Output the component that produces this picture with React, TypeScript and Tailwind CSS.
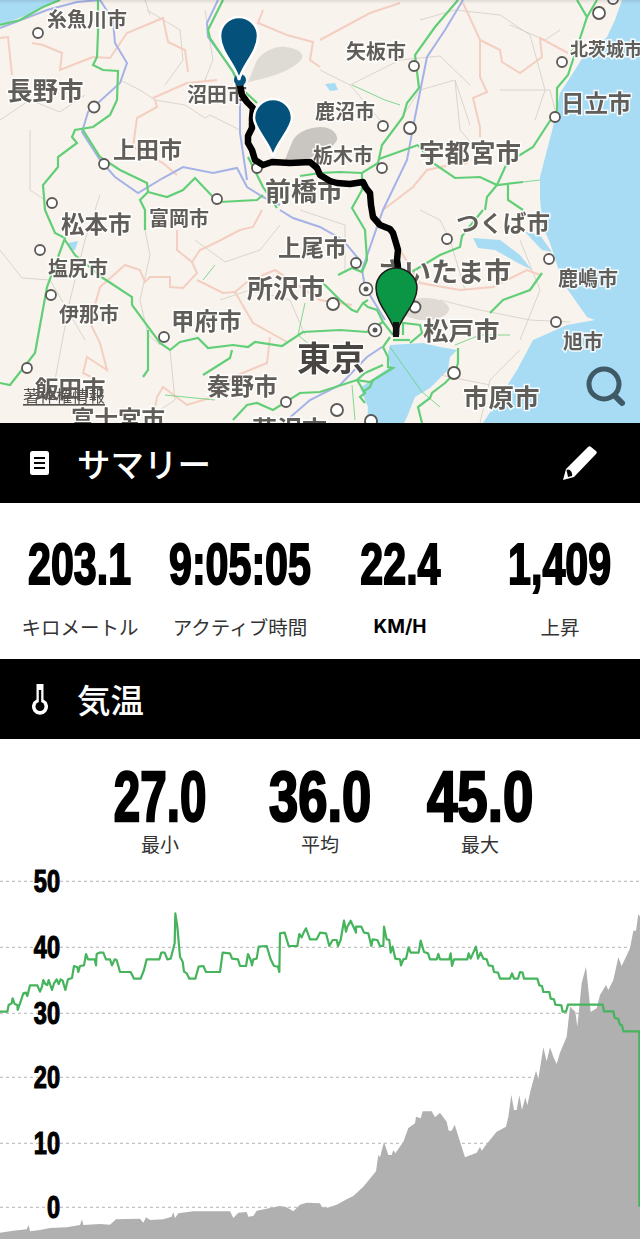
import { Fragment } from "react"

type Pt = number[]

const toPoints = (pts: Pt) => {
  const out: string[] = []
  for (let i = 0; i < pts.length; i += 2) out.push(`${pts[i]},${pts[i + 1]}`)
  return out.join(" ")
}

const stats = [
  { value: "203.1", label: "キロメートル" },
  { value: "9:05:05", label: "アクティブ時間" },
  { value: "22.4", label: "KM/H", bold: true },
  { value: "1,409", label: "上昇" },
]

const temps = [
  { value: "27.0", label: "最小", squeeze: "scale-x-[0.68]" },
  { value: "36.0", label: "平均", squeeze: "scale-x-[0.75]" },
  { value: "45.0", label: "最大", squeeze: "scale-x-[0.78]" },
]

const greenRoads: Pt[] = [
  [98, 0, 98, 33, 97, 57, 93, 65, 103, 70, 118, 71, 117, 100, 110, 115, 93, 127, 75, 130, 72, 137, 77, 143, 58, 157, 58, 167, 43, 185, 45, 210, 55, 233, 65, 238, 47, 287, 35, 353, 10, 385, 0, 383],
  [0, 25, 20, 20, 43, 7, 60, 0],
  [83, 130, 100, 157, 120, 170, 147, 183, 148, 192, 167, 197, 183, 190, 195, 178, 213, 197, 220, 202, 257, 200, 263, 195],
  [148, 192, 140, 200, 145, 210, 145, 230],
  [223, 0, 208, 30, 210, 38, 233, 72, 240, 87, 257, 103],
  [248, 157, 263, 187, 277, 208],
  [458, 0, 435, 27, 415, 55, 419, 88, 407, 103, 403, 117, 382, 145, 378, 163, 362, 173, 340, 172, 320, 173, 300, 176],
  [418, 145, 379, 159],
  [418, 145, 433, 163, 455, 178, 480, 177, 497, 185, 523, 182],
  [577, 0, 587, 17, 597, 0],
  [587, 17, 568, 75, 557, 88, 557, 110, 533, 147, 507, 163, 497, 185, 487, 197, 485, 210],
  [508, 185, 508, 200, 523, 210],
  [362, 173, 362, 190, 352, 208, 365, 230, 367, 260, 362, 272, 352, 268, 338, 275],
  [65, 240, 75, 255, 103, 278, 132, 297, 132, 305, 160, 343, 170, 350, 180, 342, 198, 338, 208, 348, 233, 345, 248, 347, 255, 342, 282, 346, 303, 332, 340, 330, 367, 332, 383, 322],
  [148, 330, 148, 370, 143, 377],
  [232, 350, 230, 358, 203, 375],
  [233, 420, 247, 405, 257, 403, 273, 410, 300, 393, 320, 392, 357, 380],
  [320, 280, 340, 300, 352, 310, 357, 312, 363, 303, 368, 300],
  [363, 303, 368, 307, 377, 310, 383, 322, 393, 335],
  [390, 337, 383, 347, 388, 357, 388, 367, 393, 368, 370, 382, 357, 380, 365, 373, 383, 365],
  [357, 380, 365, 393, 360, 397, 365, 403],
  [373, 380, 370, 387, 363, 392],
  [403, 335, 403, 323, 420, 325, 422, 333, 410, 343],
  [393, 340, 410, 340],
  [410, 273, 440, 255, 460, 247, 462, 236, 483, 210],
  [542, 273, 530, 290, 503, 300, 490, 313],
  [458, 348, 458, 363, 455, 373, 445, 383, 432, 393, 430, 398, 418, 407, 422, 423],
]

const thinGreen: Pt[] = [
  [352, 85, 385, 100, 400, 105],
  [570, 52, 580, 42],
  [523, 182, 540, 180],
  [203, 280, 215, 265],
  [305, 303, 298, 335, 310, 345],
  [455, 345, 480, 335, 510, 335],
  [165, 395, 215, 400],
  [390, 347, 422, 392, 440, 407],
  [352, 385, 355, 420],
]

const rails: Pt[] = [
  [0, 28, 47, 10, 77, 2, 100, 0, 113, 20, 115, 43, 127, 63, 120, 83, 88, 112, 82, 132, 100, 160, 115, 177, 138, 193, 163, 178, 183, 167, 213, 173, 237, 168, 247, 187, 263, 197, 280, 205],
  [218, 0, 207, 23, 208, 37, 230, 67, 240, 80, 240, 133, 247, 180],
  [463, 0, 445, 30, 427, 57, 415, 117, 407, 160, 383, 210, 362, 270, 365, 287, 385, 320],
  [280, 210, 293, 218, 320, 227, 343, 240, 362, 263],
  [287, 420, 310, 400, 340, 385, 367, 357, 382, 347],
]

const borders: Pt[] = [
  [0, 38, 8, 37, 12, 75],
  [32, 43, 43, 45, 62, 53, 60, 70, 80, 62, 93, 57, 110, 58, 127, 33, 163, 18, 168, 42, 185, 50, 188, 72],
  [155, 100, 157, 107, 137, 118, 133, 147, 163, 163, 177, 175],
  [153, 98, 187, 83, 217, 80],
  [263, 10, 258, 23, 287, 35, 313, 42, 310, 60, 320, 67],
  [320, 40, 370, 13, 400, 3],
  [463, 3, 470, 18, 480, 40, 500, 50, 502, 62, 520, 73, 542, 57, 540, 38, 568, 53],
  [480, 40, 480, 77, 487, 92, 473, 98, 480, 127, 480, 137],
  [383, 210, 413, 187, 427, 170, 450, 165, 468, 163],
  [177, 230, 177, 250, 192, 262, 200, 250, 217, 242, 240, 230, 253, 227, 262, 210],
  [192, 262, 197, 273, 183, 288, 170, 287, 170, 277, 150, 277, 145, 282, 140, 270, 125, 265, 100, 287, 90, 323, 100, 343, 107, 370, 87, 357, 83, 373, 103, 383],
  [197, 280, 223, 293, 235, 292, 253, 323, 287, 342],
  [270, 337, 267, 363, 233, 377, 213, 397, 187, 405, 163, 387, 157, 397, 153, 420],
  [235, 292, 247, 282, 275, 270, 320, 300, 352, 305],
  [400, 250, 420, 283, 460, 290, 493, 287, 513, 277, 527, 270, 540, 275],
]

const lines: Pt[] = [
  [0, 120, 30, 100, 60, 112, 85, 95],
  [30, 130, 30, 190, 45, 200],
  [120, 80, 140, 90, 155, 100, 185, 105, 205, 118, 210, 115, 240, 130],
  [147, 10, 180, 30, 183, 60, 165, 85],
  [205, 10, 213, 60, 205, 80],
  [145, 0, 150, 15],
  [100, 195, 85, 240, 70, 300, 55, 380],
  [145, 230, 150, 255, 140, 300, 148, 335, 160, 345],
  [0, 250, 22, 278, 50, 280, 85, 340],
  [170, 350, 175, 400, 145, 420],
  [195, 240, 225, 262, 260, 250, 280, 225],
  [220, 300, 250, 290, 290, 300, 305, 335],
  [420, 20, 455, 10, 500, 15, 530, 35, 545, 90, 535, 120],
  [400, 120, 420, 90, 455, 80, 470, 125],
  [455, 80, 460, 130, 490, 165],
  [500, 90, 550, 90, 555, 110],
  [320, 70, 350, 85, 380, 70, 400, 60, 440, 56, 470, 85],
  [350, 85, 380, 120],
  [560, 30, 545, 40, 510, 25],
  [440, 300, 480, 310, 530, 320, 570, 322],
  [420, 210, 440, 220, 450, 240, 465, 290],
  [300, 210, 345, 225, 345, 270],
  [520, 240, 540, 290, 520, 340],
  [520, 350, 490, 380, 480, 423],
  [440, 375, 490, 385, 510, 395],
]

const labels = [
  { t: "糸魚川市", x: 47, y: 18, s: 20 },
  { t: "長野市", x: 7, y: 88, s: 25.5 },
  { t: "沼田市", x: 187, y: 93, s: 20 },
  { t: "上田市", x: 113, y: 148, s: 23 },
  { t: "前橋市", x: 265, y: 189, s: 26 },
  { t: "鹿沼市", x: 315, y: 110, s: 20 },
  { t: "栃木市", x: 313, y: 154, s: 20 },
  { t: "矢板市", x: 346, y: 50, s: 20 },
  { t: "宇都宮市", x: 419, y: 150, s: 25.5 },
  { t: "北茨城市", x: 570, y: 48, s: 18 },
  { t: "日立市", x: 561, y: 102, s: 23.5 },
  { t: "松本市", x: 61, y: 223, s: 23.5 },
  { t: "富岡市", x: 149, y: 217, s: 20 },
  { t: "上尾市", x: 278, y: 246, s: 23 },
  { t: "塩尻市", x: 48, y: 267, s: 20 },
  { t: "所沢市", x: 247, y: 286, s: 26 },
  { t: "伊那市", x: 59, y: 313, s: 20 },
  { t: "甲府市", x: 171, y: 320, s: 23.5 },
  { t: "秦野市", x: 207, y: 385, s: 23.5 },
  { t: "飯田市", x: 35, y: 388, s: 23.5 },
  { t: "富士宮市", x: 71, y: 418, s: 23.5 },
  { t: "つくば市", x: 456, y: 222, s: 23.5 },
  { t: "さいたま市", x: 377, y: 270, s: 27 },
  { t: "鹿嶋市", x: 558, y: 277, s: 20 },
  { t: "松戸市", x: 423, y: 328, s: 25.5 },
  { t: "旭市", x: 563, y: 340, s: 20 },
  { t: "市原市", x: 463, y: 395, s: 25.5 },
  { t: "藤沢市", x: 252, y: 428, s: 25 },
]

const cities = [
  [38, 33, 5], [94, 107, 5.5], [104, 164, 5], [52, 203, 5], [217, 199, 5], [257, 168, 5],
  [40, 250, 5], [51, 295, 5], [164, 337, 5], [27, 368, 5], [286, 402, 5],
  [414, 66, 5], [383, 126, 5], [410, 128, 6], [382, 168, 5], [562, 62, 5], [555, 117, 5], [599, 13, 6], [613, -1, 5],
  [447, 239, 5], [549, 259, 5], [356, 263, 5], [333, 304, 6], [415, 307, 5.5], [556, 322, 5], [454, 373, 6], [337, 410, 6], [371, 421, 6],
]

// temperature line, in 3x crop coords of the chart
const tempA: Pt = [0,455,22,455,26,435,35,430,38,415,44,432,52,435,53,450,60,430,70,400,78,398,82,408,90,376,112,376,120,395,126,380,130,360,136,372,142,375,146,360,152,378,156,390,162,370,170,358,176,372,182,358,188,362,196,390,204,358,216,354,222,318,232,322,235,336,240,318,252,316,258,282,264,298,284,298,288,316,290,282,298,278,310,278,318,298,330,298,336,316,344,298,350,300,360,336,392,336,402,356,422,356,432,330,440,298,478,298,484,278,494,278,502,298,512,296,524,250,526,160,532,200,540,290,548,305,552,335,560,340,568,356,586,356,596,320,610,318,618,336,660,336,668,278,690,280,696,296,714,298,720,318,738,318,744,282,752,300,756,316,760,298,770,296,776,260,800,258,812,298,822,318,834,320,838,336,840,220,854,218,866,258,892,258,898,222,905,232,910,220,918,205,930,238,950,238,960,218]
const tempB: Pt = [0,218,18,220,28,258,38,240,50,240,54,258,62,240,72,182,78,215,82,200,92,182,100,200,108,218,108,200,124,200,132,218,145,220,154,258,158,238,172,240,180,258,190,258,192,200,200,238,208,240,212,278,218,260,226,296,240,298,243,316,250,298,258,296,266,262,272,278,296,278,302,242,312,276,324,280,330,298,350,298,355,282,360,298,388,298,392,280,396,318,402,298,442,298,446,280,452,296,460,278,468,260,474,296,482,278,490,296,500,298,506,316,518,318,522,336,534,338,540,356,570,356,576,340,582,356,594,356,600,336,608,338,612,356,652,356,658,376,666,378,670,396,688,396,692,416,702,418,706,434,724,436,728,455,738,455,744,434,848,434,852,454,880,454,884,474,894,476,900,494,906,496,910,514,958,514,958,1040]
const elevA: Pt = [0,1118,40,1112,80,1108,86,1095,90,1114,120,1110,150,1104,200,1102,240,1095,246,1078,250,1095,300,1092,330,1094,348,1078,420,1076,430,1088,438,1072,450,1080,490,1078,515,1070,520,1056,525,1075,535,1060,580,1054,625,1054,690,1054,700,1074,715,1058,740,1056,745,1070,760,1068,770,1052,800,1046,840,1038,860,1042,880,1054,900,1034,920,1028,960,1030]
const elevB: Pt = [0,1030,5,1040,20,1044,50,1034,80,1018,100,1008,130,980,168,934,175,885,180,892,192,846,205,885,215,885,220,870,226,880,250,845,265,804,285,790,288,770,302,775,308,754,335,754,345,772,360,758,380,785,386,812,395,812,404,794,435,892,470,878,480,860,485,872,500,852,530,815,558,800,565,770,574,704,582,750,590,750,598,706,606,750,616,712,622,736,632,690,648,632,655,656,670,562,680,604,690,562,700,590,710,612,720,578,740,530,750,440,766,455,772,500,785,370,798,320,812,456,830,445,840,405,858,375,865,390,880,360,895,292,905,318,930,265,940,212,948,212,955,162,960,170]

const scale = (a: Pt, b: Pt) => [
  ...a.map((v) => v / 3),
  ...b.map((v, i) => (i % 2 === 0 ? (v + 960) / 3 : v / 3)),
]

const tempLine = toPoints(scale(tempA, tempB))
const elevArea = toPoints([...scale(elevA, elevB), 640, 379, 0, 379])

const axis = [
  { v: "50", y: 21.3 },
  { v: "40", y: 87.3 },
  { v: "30", y: 153.3 },
  { v: "20", y: 217.3 },
  { v: "10", y: 283.3 },
  { v: "0", y: 347.3 },
]

function MapView() {
  return (
    <div className="relative h-[423px] overflow-hidden bg-[#f8f3ec]">
      <svg width="640" height="423" viewBox="0 0 640 423" className="block blur-[0.5px]">
        <polygon fill="#a8dcf5" points="0,0 57,0 30,14 0,25" />
        <polygon
          fill="#a8dcf5"
          points="622,0 615,20 607,37 583,57 573,73 560,93 553,127 547,150 540,177 540,197 542,225 550,243 563,283 587,317 595,320 567,325 533,340 517,370 500,397 483,423 640,423 640,0"
        />
        <polygon
          fill="#a8dcf5"
          points="390,345 423,343 440,347 457,350 450,357 448,370 430,388 415,397 407,417 403,425 367,425 368,407 360,388 390,367 388,353"
        />
        <polygon fill="#a8dcf5" points="473,238 500,240 520,255 532,270 518,263 495,250 478,248" />
        <polygon fill="#a8dcf5" points="525,232 540,235 552,252 542,250" />
        <polygon fill="#a8dcf5" points="325,84 335,83 338,90 330,91" />
        <polygon fill="#a8dcf5" points="68,243 78,241 75,250 70,250" />

        <path d="M248,82 L257,60 C265,50 277,46 285,47 C297,48 304,53 302,58 C298,66 280,76 248,82 Z" fill="#dedad4" />
        <path d="M284,162 L293,140 C298,132 307,128 320,127 C332,127 338,134 337,140 C332,150 315,160 284,162 Z" fill="#c9c6c1" />
        <ellipse cx="425" cy="309" rx="24" ry="11" fill="#dfdad3" />

        {lines.map((pts, i) => (
          <polyline key={i} points={toPoints(pts)} fill="none" stroke="#d6d1c8" strokeWidth="0.9" />
        ))}
        {borders.map((pts, i) => (
          <polyline key={i} points={toPoints(pts)} fill="none" stroke="#f4cfc1" strokeWidth="2" />
        ))}
        {thinGreen.map((pts, i) => (
          <polyline key={i} points={toPoints(pts)} fill="none" stroke="#62d07a" strokeWidth="0.8" />
        ))}
        {rails.map((pts, i) => (
          <polyline key={i} points={toPoints(pts)} fill="none" stroke="#a5b2e8" strokeWidth="2" />
        ))}
        {greenRoads.map((pts, i) => (
          <polyline key={i} points={toPoints(pts)} fill="none" stroke="#62cf78" strokeWidth="2.2" />
        ))}

        {cities.map(([x, y, r], i) => (
          <circle key={i} cx={x} cy={y} r={r} fill="#fff" stroke="#5c5855" strokeWidth="1.8" />
        ))}
        {[[366, 289], [375, 330]].map(([x, y], i) => (
          <Fragment key={i}>
            <circle cx={x} cy={y} r="6.5" fill="#fff" stroke="#5c5855" strokeWidth="1.6" />
            <circle cx={x} cy={y} r="2.5" fill="#5c5855" />
          </Fragment>
        ))}

        <g className="font-['Noto_Sans_CJK_JP',sans-serif] [paint-order:stroke]" stroke="#fff" strokeOpacity="0.85" strokeWidth="3" fill="#615e5a">
          {labels.map((l) => (
            <text key={l.t} x={l.x} y={l.y} fontSize={l.s} fontWeight="700" dominantBaseline="central">
              {l.t}
            </text>
          ))}
          <text x="297" y="356" fontSize="34" fontWeight="700" fill="#484542" dominantBaseline="central">
            東京
          </text>
        </g>
        <text
          x="23"
          y="395"
          fontSize="16.4"
          fill="#55524f"
          textDecoration="underline"
          dominantBaseline="central"
          className="font-['Noto_Sans_CJK_JP',sans-serif]"
        >
          著作権情報
        </text>

        <polyline
          points="240,85 242,95 247,102 253,108 252,118 252,128 248,136 248,143 252,150 255,160 263,165 272,162 290,163 310,162 317,168 320,175 330,181 337,183 350,184 363,182 366,188 370,193 371,205 373,217 380,225 390,229 393,233 396,243 398,250 397,260 398,267 396,335"
          fill="none"
          stroke="#000"
          strokeWidth="6.5"
          strokeLinejoin="round"
        />

        <circle cx="240" cy="80" r="6" fill="#04527b" />
        <path d="M239,80 C236,66 220,52 220,36 C220,25 229,17 239,17 C249,17 258,25 258,36 C258,52 242,66 239,80 Z" fill="#04527b" stroke="#fff" strokeWidth="2.5" />
        <path d="M273,157 C270,143 254,129 254,118 C254,107 263,99 273,99 C283,99 292,107 292,118 C292,129 276,143 273,157 Z" fill="#04527b" stroke="#fff" strokeWidth="2.5" />
        <path d="M396,335 C393,318 376,305 376,288 C376,277 385,268 396,268 C407,268 417,277 417,288 C417,305 399,318 396,335 Z" fill="#0b9645" stroke="#1c1c1c" strokeWidth="1.5" />
        <rect x="393" y="322" width="6" height="15" fill="#111" />

        <circle cx="604" cy="384" r="15" fill="none" stroke="#3f5a66" strokeWidth="5" />
        <line x1="615" y1="396" x2="622" y2="403" stroke="#3f5a66" strokeWidth="6" strokeLinecap="round" />
      </svg>
      <div className="absolute inset-x-0 top-0 h-1 bg-gradient-to-b from-black/10 to-transparent" />
    </div>
  )
}

function SectionHeader({ icon, title, action }: { icon: React.ReactNode; title: string; action?: React.ReactNode }) {
  return (
    <div className="flex h-20 items-center bg-black pl-[29px] pr-[43px]">
      <div className="flex w-[48px] items-center">{icon}</div>
      <h2 className="font-['Noto_Sans_CJK_JP',sans-serif] text-[33.5px] leading-none font-medium text-white">{title}</h2>
      {action && <div className="ml-auto">{action}</div>}
    </div>
  )
}

function Chart() {
  return (
    <svg width="640" height="380" viewBox="0 0 640 380" className="block">
      {axis.map((a) => (
        <line key={a.v} x1="0" x2="640" y1={a.y} y2={a.y} stroke="#b4b4b4" strokeWidth="1" strokeDasharray="3 3" />
      ))}
      <polygon points={elevArea} fill="#b0b0b0" />
      <polyline points={tempLine} fill="none" stroke="#45b45c" strokeWidth="2.2" strokeLinejoin="round" />
      {axis.map((a) => (
        <g key={a.v} transform={`translate(60 ${a.y}) scale(0.76 1)`}>
          <text
            y="11"
            textAnchor="end"
            fontSize="31"
            fontWeight="700"
            fill="#000"
            stroke="#000"
            strokeWidth="1.2"
            className="font-['Liberation_Sans',sans-serif]"
          >
            {a.v}
          </text>
        </g>
      ))}
    </svg>
  )
}

export default function App() {
  return (
    <div className="w-[640px] h-[1240px] overflow-hidden bg-white">
      <MapView />

      <SectionHeader
        icon={
          <svg width="21" height="26" viewBox="0 0 21 26">
            <rect x="1" y="1" width="19" height="24" rx="2.5" fill="#fff" />
            <rect x="5" y="7" width="11" height="2" fill="#000" />
            <rect x="5" y="12" width="11" height="2" fill="#000" />
            <rect x="5" y="17" width="11" height="2" fill="#000" />
          </svg>
        }
        title="サマリー"
        action={
          <svg width="34" height="34" viewBox="0 0 34 34" className="block">
            <path d="M0,34 L3,23 L25,1 C26,0 27,0 28,1 L33,5 C34,6 34,7 33,8 L11,31 Z" fill="#fff" />
            <path d="M3.5,24 C6,22 10,26 9,30 L5,31 Z" fill="#000" />
          </svg>
        }
      />

      <div className="grid h-[156px] grid-cols-4 items-start pt-[32px]">
        {stats.map((s) => (
          <div key={s.value} className="flex flex-col items-center">
            <div className="font-['Liberation_Sans',sans-serif] text-[58px] leading-[58px] font-bold whitespace-nowrap text-black scale-x-[0.71] [-webkit-text-stroke:2px_black]">
              {s.value}
            </div>
            <div
              className={`mt-[20px] whitespace-nowrap leading-[28px] text-[#333] ${
                s.bold
                  ? "font-['Inter',sans-serif] text-[19px] font-bold text-black"
                  : "font-['Noto_Sans_CJK_JP',sans-serif] text-[19.5px]"
              }`}
            >
              {s.label}
            </div>
          </div>
        ))}
      </div>

      <SectionHeader
        icon={
          <svg width="18" height="32" viewBox="0 0 18 32" className="ml-[2px]">
            <path d="M5.5,1 L12.5,1 L12.5,16.5 A8,8 0 1 1 5.5,16.5 Z" fill="#fff" />
            <circle cx="9" cy="23.5" r="4.5" fill="#000" />
            <rect x="7.8" y="7" width="2.4" height="14" fill="#000" />
          </svg>
        }
        title="気温"
      />

      <div className="mx-auto grid h-[121px] w-[480px] grid-cols-3 items-start pt-[25px]">
        {temps.map((t) => (
          <div key={t.label} className="flex flex-col items-center">
            <div className={`font-['Liberation_Sans',sans-serif] text-[70px] leading-[66px] font-bold whitespace-nowrap text-black [-webkit-text-stroke:2.5px_black] ${t.squeeze}`}>
              {t.value}
            </div>
            <div className="font-['Noto_Sans_CJK_JP',sans-serif] text-[19px] leading-[28px] text-[#333]">{t.label}</div>
          </div>
        ))}
      </div>

      <Chart />
    </div>
  )
}
